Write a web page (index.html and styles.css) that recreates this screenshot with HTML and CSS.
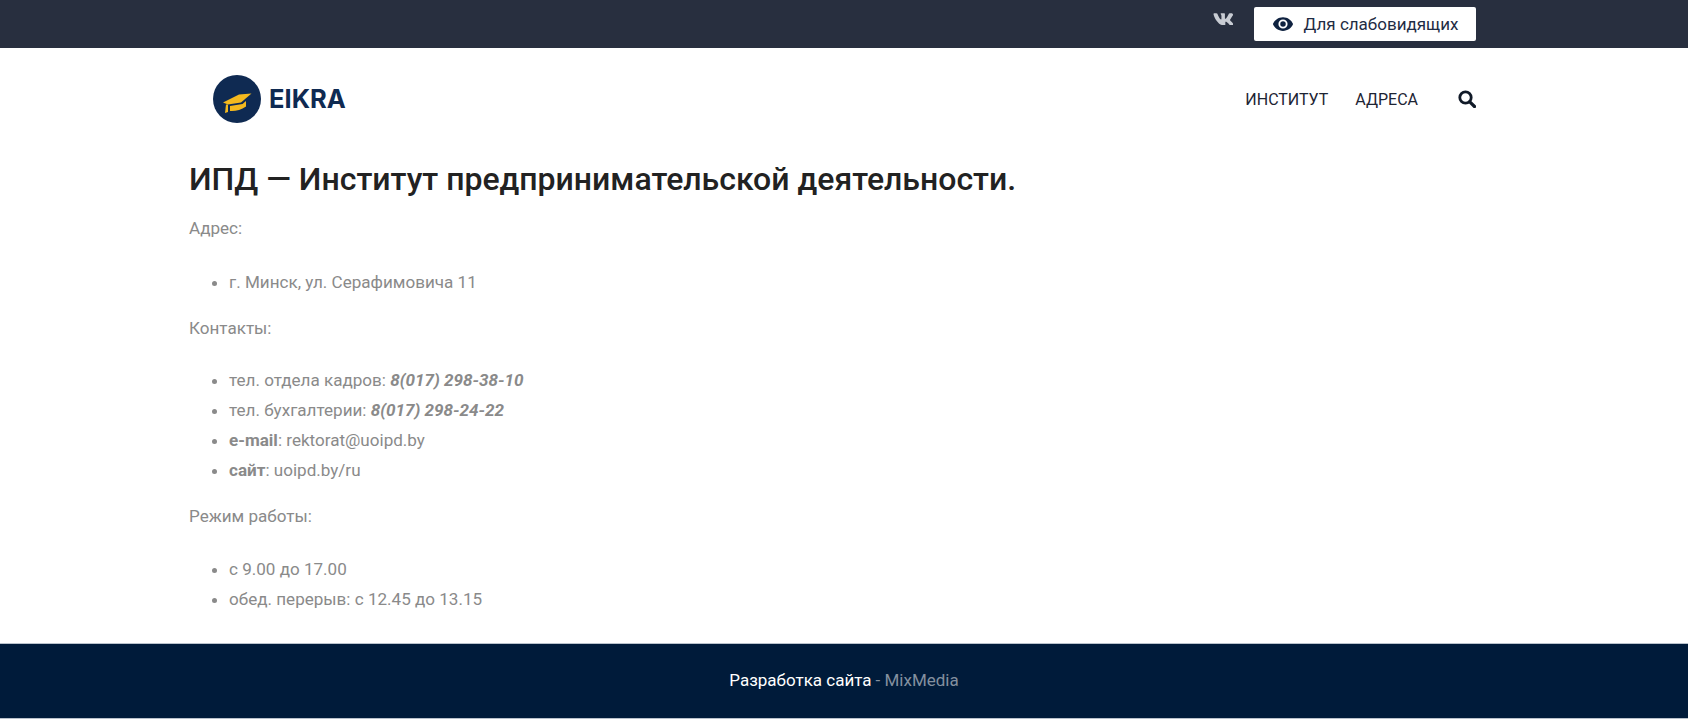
FILE: index.html
```html
<!DOCTYPE html>
<html lang="ru">
<head>
<meta charset="utf-8">
<title>ИПД — Институт предпринимательской деятельности</title>
<link rel="stylesheet" href="styles.css">
</head>
<body>
<div class="topbar">
  <div class="wrap topbar-in">
    <svg class="vk" viewBox="0 0 24 14" width="20" height="12"><path fill="#c8ccd3" d="M23.4 1c.2-.5 0-.9-.8-.9h-2.500c-.6 0-.9.300-1.100.7 0 0-1.300 3.200-3.100 5.200-.6.600-.8.800-1.200.8-.2 0-.4-.2-.4-.7V1c0-.6-.2-.9-.7-.9H9.700c-.4 0-.6.300-.6.500 0 .6.900.7 1 2.400v3.700c0 .8-.1.900-.5.900-.9 0-3.100-3.300-4.400-7.100C5 .8 4.800.1 4.100.1H1.500C.8.100.6.500.6.900c0 .7.900 4.200 4.200 8.800 2.200 3.200 5.300 4.900 8.100 4.900 1.700 0 1.900-.4 1.900-1v-2.400c0-.8.200-.9.700-.9.400 0 1.100.2 2.600 1.700 1.800 1.800 2.100 2.600 3.100 2.600h2.500c.7 0 1.100-.4.900-1.100-.2-.7-1.100-1.700-2.100-2.900-.6-.7-1.500-1.400-1.800-1.800-.4-.5-.3-.7 0-1.200 0 0 3.200-4.600 3.600-6.100z"/></svg>
    <a class="eye-btn" href="#">
      <svg viewBox="0 0 24 24" width="22" height="22"><path fill="#0f2240" d="M12 4.500C7 4.500 2.700 7.600 1 12c1.700 4.400 6 7.500 11 7.500s9.300-3.100 11-7.500c-1.700-4.400-6-7.500-11-7.500zM12 17a5 5 0 1 1 0-10 5 5 0 0 1 0 10zm0-8a3 3 0 1 0 0 6 3 3 0 0 0 0-6z"/></svg>
      <span>Для слабовидящих</span>
    </a>
  </div>
</div>
<header class="wrap header">
  <a class="logo" href="#">
    <svg viewBox="0 0 48 48" width="48" height="48">
      <circle cx="24" cy="24" r="24" fill="#0f2a52"/>
      <path fill="#f4b91e" d="M10 27.500 26 19.500 38.500 18.500 28 27.500 15 29.500z"/>
      <path fill="#f4b91e" d="M17 31 29.500 29 33 26V31.500C28 35 22 36.500 17 36z"/>
      <path fill="#f4b91e" d="M13 29.500 15 29.500V37L12 38z"/>
    </svg>
    <span>EIKRA</span>
  </a>
  <nav class="nav">
    <a class="nav-link" href="#">ИНСТИТУТ</a>
    <a class="nav-link" href="#">АДРЕСА</a>
    <svg class="search" viewBox="0 0 18 18" width="18" height="18"><circle cx="7.500" cy="7.500" r="5.700" fill="none" stroke="#111a28" stroke-width="2.800"/><path d="M11.800 11.800 16.500 16.500" stroke="#111a28" stroke-width="3.200" stroke-linecap="round"/></svg>
  </nav>
</header>
<main class="wrap content">
  <h1>ИПД — Институт предпринимательской деятельности.</h1>
  <p class="first">Адрес:</p>
  <ul><li>г. Минск, ул. Серафимовича 11</li></ul>
  <p>Контакты:</p>
  <ul>
    <li>тел. отдела кадров: <b><i>8(017) 298-38-10</i></b></li>
    <li>тел. бухгалтерии: <b><i>8(017) 298-24-22</i></b></li>
    <li><b>e-mail</b>: rektorat@uoipd.by</li>
    <li><b>сайт</b>: uoipd.by/ru</li>
  </ul>
  <p class="last">Режим работы:</p>
  <ul>
    <li>с 9.00 до 17.00</li>
    <li>обед. перерыв: с 12.45 до 13.15</li>
  </ul>
</main>
<footer class="footer"><span class="dev">Разработка сайта</span> - MixMedia</footer>
</body>
</html>
```
FILE: styles.css
```css
* { box-sizing: border-box; }
html, body { margin: 0; padding: 0; }
body { background: #fff; font-family: Roboto, "Liberation Sans", sans-serif; font-size: 17.070px; color: #8a8a8a; }
a { text-decoration: none; color: inherit; }
.wrap { width: 1287px; margin-left: 189px; }
.topbar { background: #282f3f; height: 48px; }
.topbar-in { display: flex; justify-content: flex-end; align-items: center; height: 41px; gap: 21px; }
.vk { display: block; margin-top: -3px; }
.eye-btn { margin-top: 7px; height: 34px; width: 222px; background: #fff; border-radius: 2px; display: flex; align-items: center; justify-content: center; gap: 10px; color: #1f2c44; font-size: 17px; }
.header { height: 101px; display: flex; justify-content: space-between; align-items: center; padding-left: 24px; }
.logo { display: flex; align-items: center; gap: 8px; font-family: Inter, Roboto, sans-serif; font-size: 25.500px; font-weight: 700; color: #0f2a52; }
.nav { display: flex; align-items: center; font-size: 16px; font-weight: 400; color: #1d2433; gap: 27px; }
.nav-link { padding-top: 1px; }
.search { margin-left: 13px; }
.content { padding-top: 12px; }
h1 { margin: 0 0 16px; font-size: 32px; line-height: 36px; font-weight: 500; color: #222; }
p { margin: 0 0 22px; line-height: 30px; }
p.first { margin-bottom: 24px; }
p.last { margin-bottom: 23px; }
ul { margin: 0 0 16px; padding-left: 40px; }
li { line-height: 30px; }
.footer { margin-top: 29px; height: 76px; padding-bottom: 2px; background: #001b3a; display: flex; align-items: center; justify-content: center; gap: 4px; color: #83909f; font-size: 17px; border-top: 1px solid #b9c2cc; border-bottom: 1px solid #b9c2cc; }
.dev { color: #fff; }
```
